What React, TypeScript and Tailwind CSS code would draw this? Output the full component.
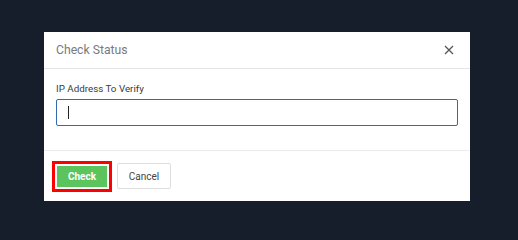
import React from 'react';

const App: React.FC = () => {
  return (
    <div className="min-h-screen w-full bg-[#161d2b] pt-[32px] pl-[44px] font-['Roboto',sans-serif]">
      <div className="w-[426px] bg-white">
        <div className="flex h-[37px] items-center justify-between border-b border-[#e5e5e5] pl-[12px] pr-[16px]">
          <h2 className="text-[12.2px] text-[#7a7a7a]">Check Status</h2>
          <button className="text-[#555]">
            <svg width="10" height="10" viewBox="0 0 10 10" stroke="currentColor" strokeWidth="1.3" fill="none">
              <path d="M1 1 L9 9 M9 1 L1 9" />
            </svg>
          </button>
        </div>
        <div className="h-[82px] border-b border-[#ececf0] px-[12px] pt-[13px]">
          <label className="block text-[9.8px] leading-[14px] text-[#3a3a3a]">IP Address To Verify</label>
          <div className="mt-[3px] flex h-[27px] w-[402px] items-center rounded-[2px] border border-[#2f6bb0] pl-[11px]">
            <span className="h-[13px] w-px bg-[#222]" />
          </div>
        </div>
        <div className="flex h-[50px] items-center gap-[5px] pl-[8px]">
          <div className="border-[3px] border-[#ff0000] p-[2px]">
            <button className="flex h-[21px] w-[50px] items-center justify-center bg-[#5cc45c] text-[10px] font-bold text-white">
              Check
            </button>
          </div>
          <button className="h-[26px] w-[54px] rounded-[2px] border border-[#dedede] text-[10px] text-[#444]">
            Cancel
          </button>
        </div>
      </div>
    </div>
  );
};

export default App;
